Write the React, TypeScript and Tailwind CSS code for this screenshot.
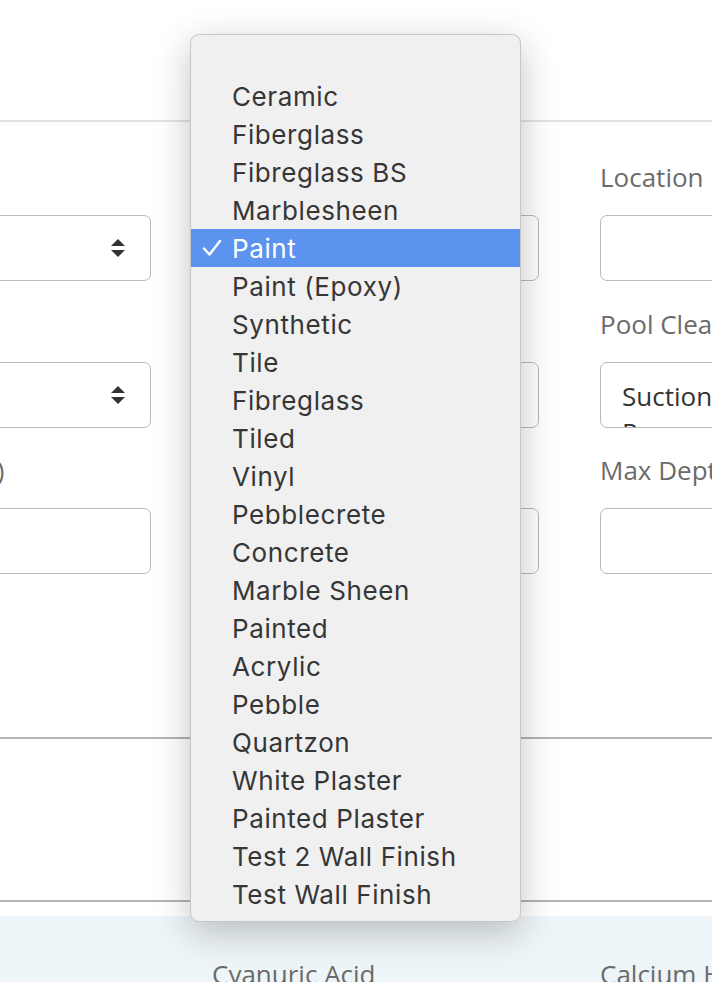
import React from "react";

const finishes = [
  "Ceramic",
  "Fiberglass",
  "Fibreglass BS",
  "Marblesheen",
  "Paint",
  "Paint (Epoxy)",
  "Synthetic",
  "Tile",
  "Fibreglass",
  "Tiled",
  "Vinyl",
  "Pebblecrete",
  "Concrete",
  "Marble Sheen",
  "Painted",
  "Acrylic",
  "Pebble",
  "Quartzon",
  "White Plaster",
  "Painted Plaster",
  "Test 2 Wall Finish",
  "Test Wall Finish",
];

const selectedIndex = 4;

const SelectArrows = () => (
  <svg width="16" height="20" viewBox="0 0 16 20" className="text-[#333]">
    <path d="M8 1 L15 8 L1 8 Z" fill="currentColor" />
    <path d="M1 12 L15 12 L8 19 Z" fill="currentColor" />
  </svg>
);

interface FieldProps {
  label: string;
  select?: boolean;
  value?: React.ReactNode;
}

const Field: React.FC<FieldProps> = ({ label, select, value }) => (
  <div className="flex flex-col">
    <label className="h-8 leading-8 text-[26px] text-[#6b6b6b] whitespace-nowrap">
      {label}
    </label>
    <div className="mt-[22px] h-[66px] rounded-[7px] border border-[#b9b9b9] bg-white flex items-start justify-between overflow-hidden pl-[21px] pr-6">
      <div className="pt-[15px] text-[26px] leading-[36px] text-[#333]">
        {value}
      </div>
      {select && (
        <div className="self-center">
          <SelectArrows />
        </div>
      )}
    </div>
  </div>
);

export default function App() {
  return (
    <div className="relative w-[712px] h-[982px] overflow-hidden bg-white font-['Open_Sans',sans-serif]">
      <div className="h-[122px] border-b-2 border-[#e0e3e7]" />

      <div className="-ml-[177px] grid grid-cols-[328px_327px_328px] gap-x-[61px] pt-[39px] h-[617px] border-b-2 border-[#b3b3b3]">
        <div className="flex flex-col">
          <Field label="Pool Type" select />
          <div className="mt-[27px]">
            <Field label="Pool Shape" select />
          </div>
          <div className="mt-[26px]">
            <Field label="Volume (Litres)" />
          </div>
        </div>
        <div className="flex flex-col">
          <Field label="Wall Finish" select value="Paint" />
          <div className="mt-[27px]">
            <Field label="Pool Size" />
          </div>
          <div className="mt-[26px]">
            <Field label="Min Depth (m)" />
          </div>
        </div>
        <div className="flex flex-col">
          <Field label="Location" />
          <div className="mt-[27px]">
            <Field
              label="Pool Cleaner"
              select
              value={
                <>
                  Suction
                  <br />
                  Pressure
                </>
              }
            />
          </div>
          <div className="mt-[26px]">
            <Field label="Max Depth (m)" />
          </div>
        </div>
      </div>

      <div className="h-[163px] border-b-2 border-[#b3b3b3]" />

      <div className="mt-[14px] h-[80px] bg-[#eef5f8] -ml-[177px] grid grid-cols-[328px_327px_328px] gap-x-[61px] pt-[42px]">
        <div className="text-[26px] leading-8 text-[#6b6b6b]">Chlorine</div>
        <div className="text-[26px] leading-8 text-[#6b6b6b]">
          Cyanuric Acid
        </div>
        <div className="text-[26px] leading-8 text-[#6b6b6b] whitespace-nowrap">
          Calcium Hardness
        </div>
      </div>

      <div className="absolute left-[190px] top-[34px] w-[331px] h-[888px] rounded-[9px] border border-[#c6c6c6] bg-[#f0f0f0] shadow-[0_10px_36px_rgba(0,0,0,0.24)] pt-[4px] font-['Inter',sans-serif]">
        <div className="h-[38px]" />
        {finishes.map((f, i) => {
          const active = i === selectedIndex;
          return (
            <div
              key={i}
              className={`relative h-[38px] flex items-center pl-[41px] text-[26px] tracking-[0.6px] ${
                active ? "bg-[#5b93ef] text-white" : "text-[#363636]"
              }`}
            >
              {active && (
                <svg
                  width="20"
                  height="18"
                  viewBox="0 0 20 18"
                  className="absolute left-[11px] top-[10px]"
                >
                  <path
                    d="M2 9.5 L7.5 15.5 L18 2"
                    fill="none"
                    stroke="white"
                    strokeWidth="2.4"
                    strokeLinecap="round"
                    strokeLinejoin="round"
                  />
                </svg>
              )}
              {f}
            </div>
          );
        })}
      </div>
    </div>
  );
}
